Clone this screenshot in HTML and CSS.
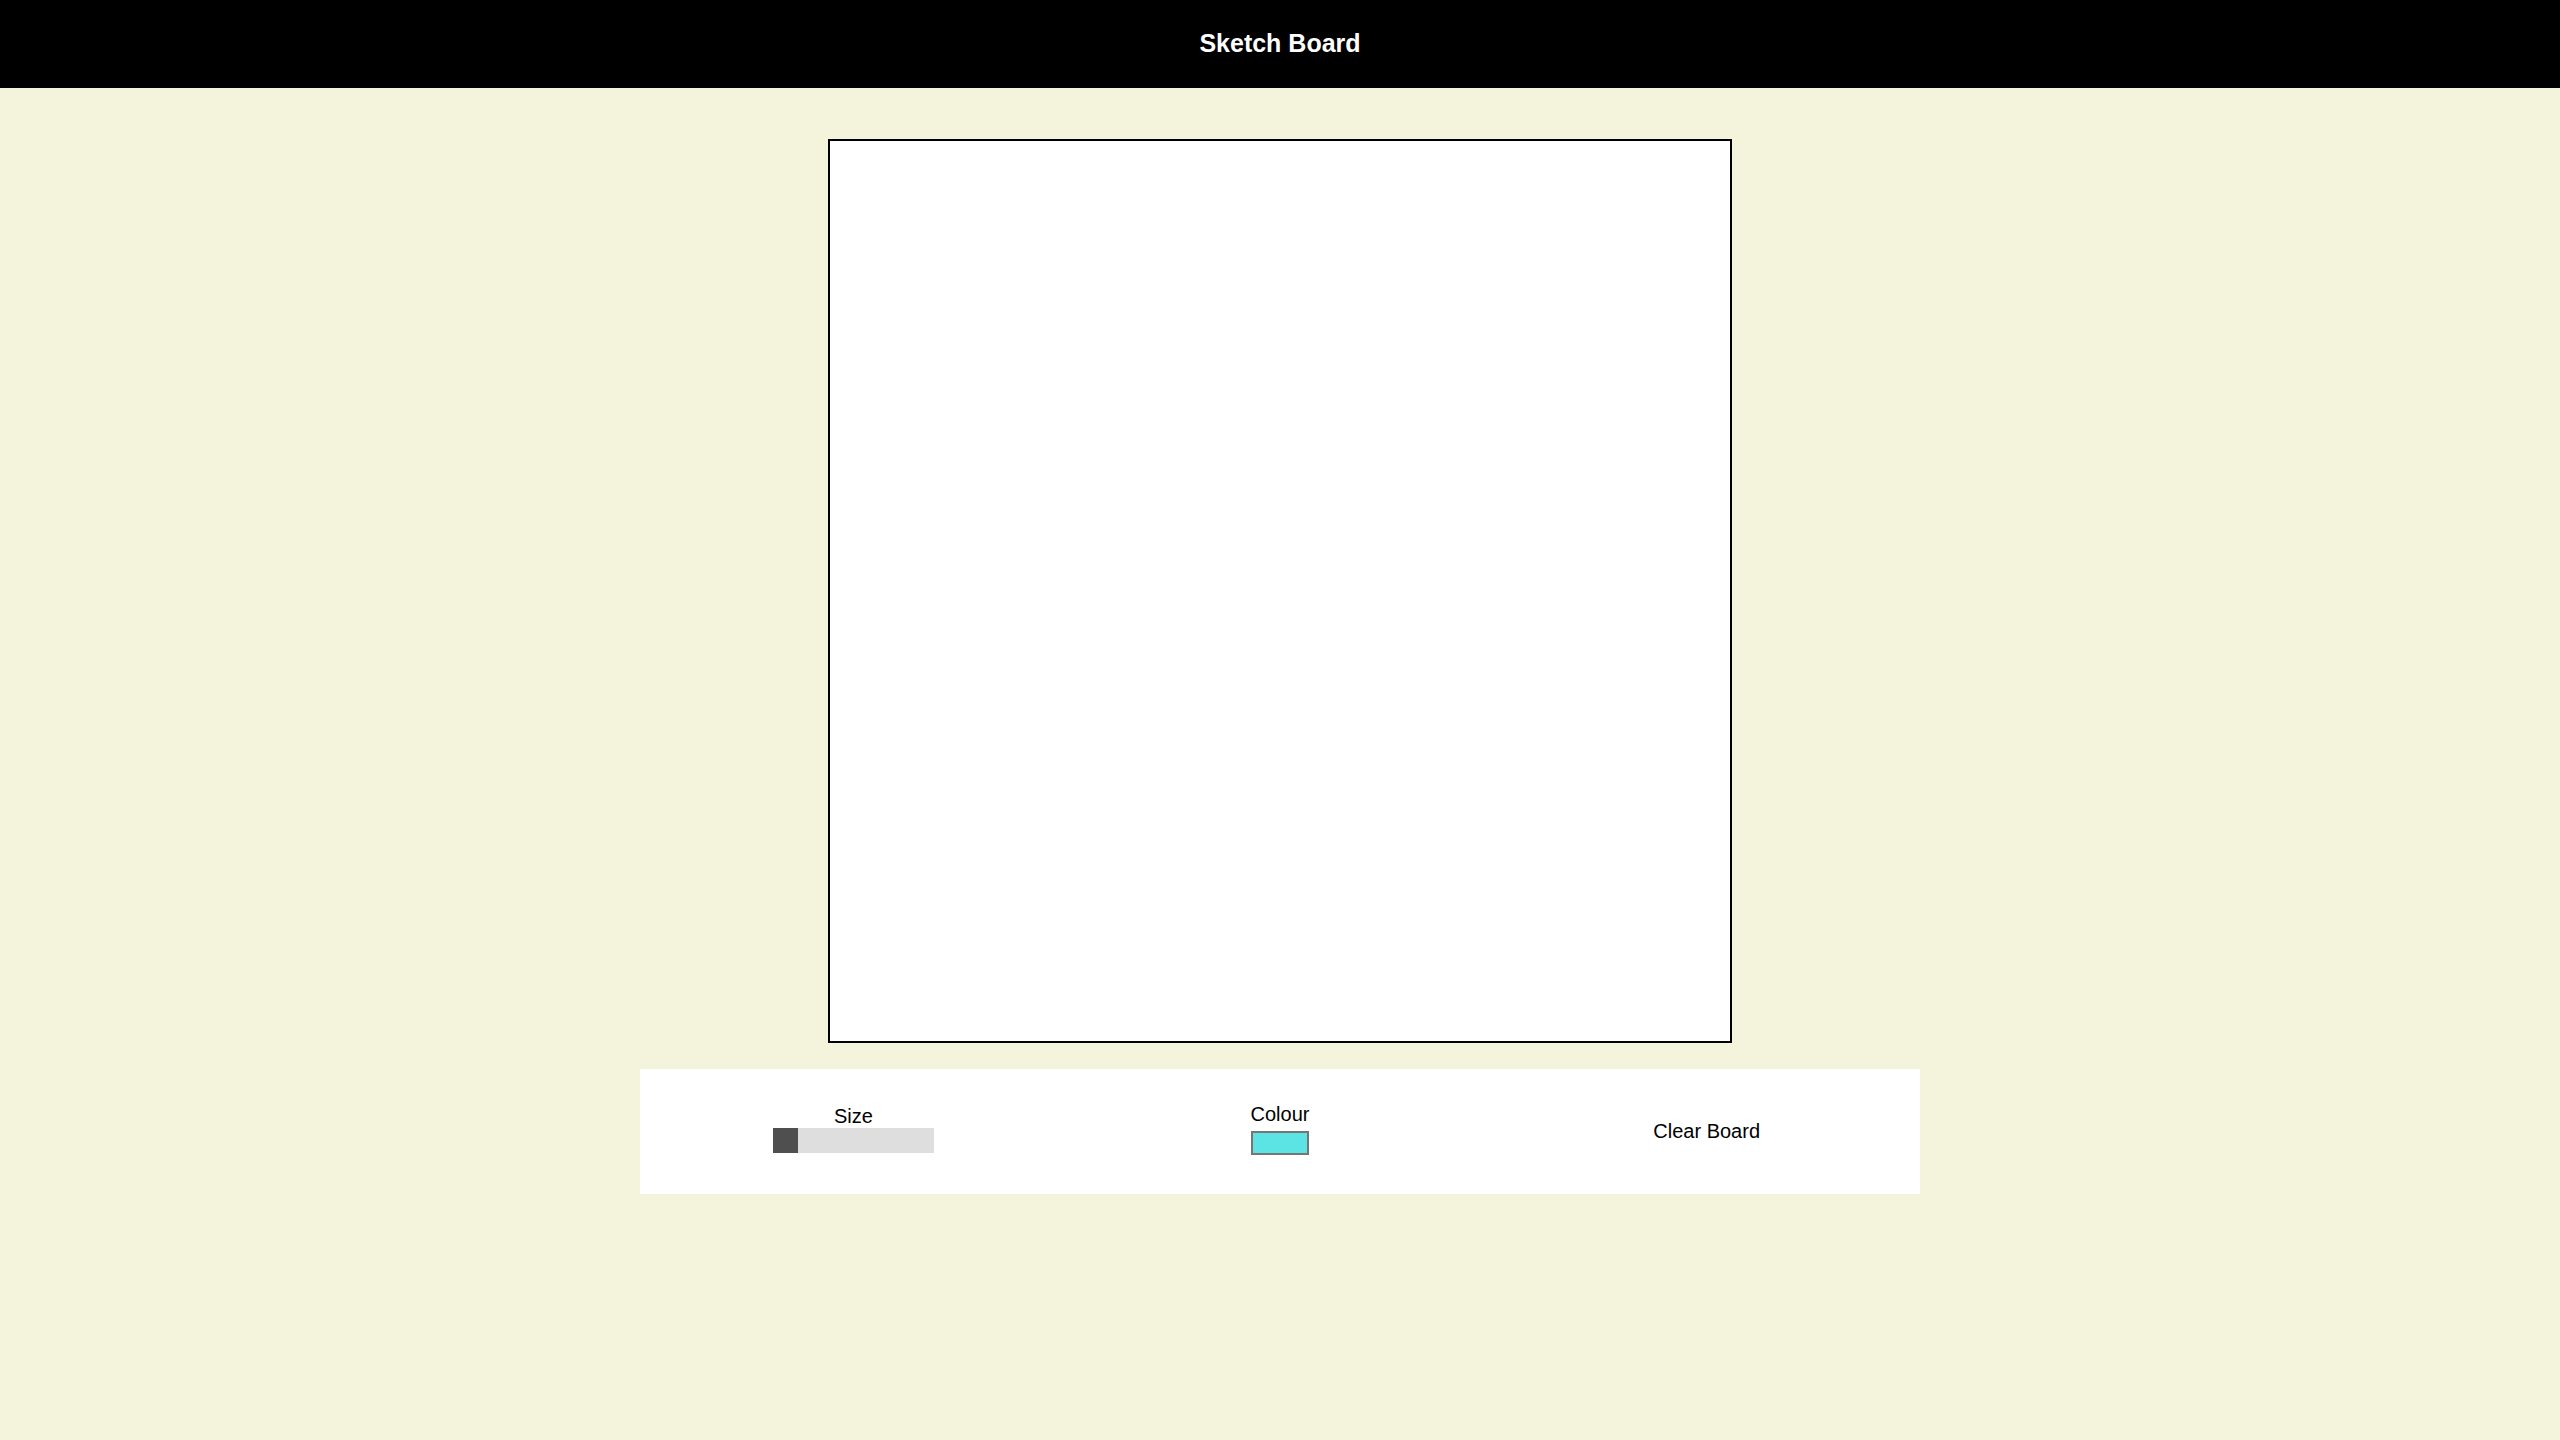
FILE: index.html
```html
<!DOCTYPE html>
<html lang="en">
<head>
<meta charset="utf-8">
<title>Sketch Board</title>
<link rel="stylesheet" href="styles.css">
</head>
<body>
<header class="topbar">
  <h1 class="title">Sketch Board</h1>
</header>
<main class="main">
  <div class="board"></div>
  <section class="controls">
    <div class="control control-size">
      <span class="label">Size</span>
      <div class="slider"><div class="thumb"></div></div>
    </div>
    <div class="control control-colour">
      <span class="label">Colour</span>
      <div class="swatch"></div>
    </div>
    <div class="control control-clear">
      <span class="clear">Clear Board</span>
    </div>
  </section>
</main>
</body>
</html>
```
FILE: styles.css
```css
* { box-sizing: border-box; }
html, body {
  margin: 0;
  padding: 0;
}
body {
  background: #f4f4dc;
  font-family: "Liberation Sans", Arial, sans-serif;
  color: #000;
  min-height: 1440px;
}
.topbar {
  height: 88px;
  background: #000;
  display: flex;
  align-items: center;
  justify-content: center;
}
.title {
  margin: 0;
  color: #fff;
  font-size: 25px;
  font-weight: bold;
  line-height: 1;
  padding-bottom: 1px;
}
.main {
  display: flex;
  flex-direction: column;
  align-items: center;
  padding-top: 51px;
}
.board {
  width: 904px;
  height: 904px;
  background: #fff;
  border: 2px solid #000;
}
.controls {
  margin-top: 26px;
  width: 1280px;
  height: 125px;
  background: #fff;
  display: grid;
  grid-template-columns: repeat(3, 1fr);
  align-items: center;
  justify-items: center;
}
.control {
  display: flex;
  flex-direction: column;
  align-items: center;
}
.control-size, .control-colour {
  margin-bottom: 5px;
}
.label {
  font-size: 20px;
  line-height: 23px;
}
.slider {
  width: 161px;
  height: 25px;
  background: #dedede;
  display: flex;
}
.thumb {
  width: 25px;
  height: 25px;
  background: #4f4f4f;
}
.swatch {
  margin-top: 5px;
  width: 58px;
  height: 24px;
  background: #5ce3e3;
  border: 2px solid #767676;
}
.clear {
  font-size: 20px;
  line-height: 23px;
}
```
